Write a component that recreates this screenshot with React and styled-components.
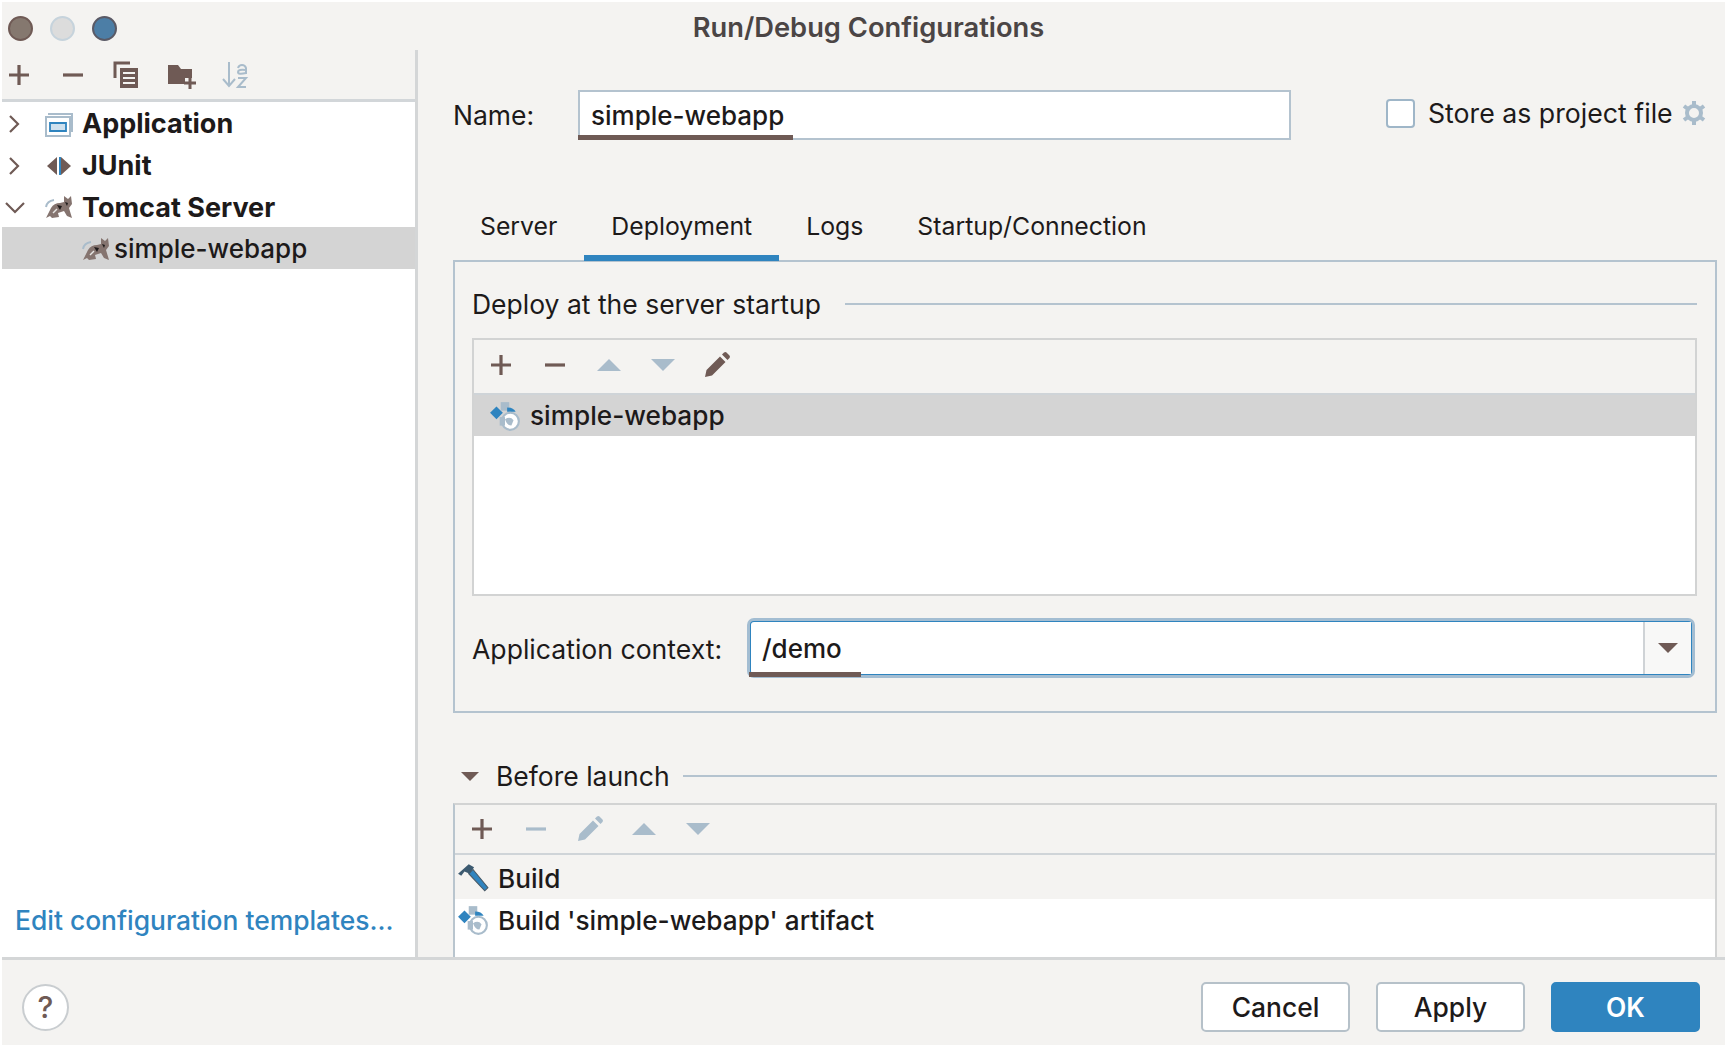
import React from 'react';
import styled, { createGlobalStyle } from 'styled-components';

const BROWN = '#6f5a55';
const BLUE = '#2f84bf';
const HAZE = '#a9bccb';
const LINE = '#b4c3cf';

const GlobalStyle = createGlobalStyle`
  html, body { margin: 0; padding: 0; background: #fff; }
  body { font-family: Inter, "Liberation Sans", sans-serif; color: #1d1a1a; }
  * { box-sizing: border-box; }
`;

const Window = styled.div`
  width: 1725px;
  height: 1047px;
  padding: 2px 0 2px 2px;
  display: flex;
  flex-direction: column;
  background: #fff;
  overflow: hidden;
`;

const TitleBar = styled.div`
  height: 48px;
  flex: none;
  background: #f4f3f1;
  display: flex;
  align-items: center;
  justify-content: center;
  position: relative;
  font-size: 27.300px;
  font-weight: 600;
  color: #4b4545;
  padding: 2px 0 0 10px;
`;

const Lights = styled.div`
  position: absolute;
  left: 6px;
  top: 14px;
  display: flex;
  gap: 17px;
`;

const Light = styled.span`
  width: 25px;
  height: 25px;
  border-radius: 50%;
  background: ${(p) => p.$fill};
  border: 2px solid ${(p) => p.$ring};
`;

const Body = styled.div`
  flex: 1;
  min-height: 0;
  display: flex;
`;

const Sidebar = styled.div`
  width: 416px;
  flex: none;
  display: flex;
  flex-direction: column;
  background: #fff;
  border-right: 3px solid #d4d6d7;
`;

const SideTools = styled.div`
  height: 52px;
  flex: none;
  background: #f4f3f1;
  border-bottom: 3px solid #d2d6d9;
  display: flex;
  align-items: center;
  padding-left: 2px;
  gap: 24px;
`;

const Tree = styled.div`
  flex: 1;
  display: flex;
  flex-direction: column;
`;

const TreeRow = styled.div`
  height: 41.700px;
  flex: none;
  display: flex;
  align-items: center;
  padding: 2px 0 0 ${(p) => (p.$child ? '79px' : '3px')};
  background: ${(p) => (p.$selected ? '#d4d4d4' : 'transparent')};
  font-size: ${(p) => (p.$child ? '26px' : '27px')};
  font-weight: ${(p) => (p.$child ? 500 : 700)};
`;

const Chevron = styled.svg`
  width: 20px;
  height: 20px;
  margin-right: 19px;
  flex: none;
`;

const RowIcon = styled.svg`
  width: ${(p) => p.$size || '30px'};
  height: ${(p) => p.$size || '30px'};
  margin-right: ${(p) => p.$gap || '8px'};
  flex: none;
`;

const TemplatesLink = styled.a`
  margin: auto 0 21px 13px;
  font-size: 26.400px;
  font-weight: 500;
  color: ${BLUE};
`;

const Main = styled.div`
  flex: 1;
  min-width: 0;
  background: #f4f3f1;
  padding: 40px 8px 0 35px;
  display: flex;
  flex-direction: column;
`;

const NameRow = styled.div`
  display: flex;
  align-items: center;
  height: 50px;
  font-size: 26.500px;
`;

const NameLabel = styled.span`
  width: 125px;
  flex: none;
`;

const TextField = styled.div`
  position: relative;
  width: 713px;
  height: 50px;
  flex: none;
  background: #fff;
  border: 2px solid ${LINE};
  display: flex;
  align-items: center;
  padding-left: 11px;
  font-size: 26px;
  font-weight: 500;
`;

const Squiggle = styled.span`
  position: absolute;
  left: ${(p) => p.$left || '0'};
  bottom: ${(p) => p.$bottom || '-2px'};
  width: ${(p) => p.$width};
  height: 5px;
  background: ${BROWN};
`;

const StoreCheck = styled.span`
  width: 29px;
  height: 29px;
  margin: 0 0 4px 95px;
  flex: none;
  background: #fff;
  border: 2px solid #9fb6c8;
  border-radius: 4px;
`;

const StoreLabel = styled.span`
  margin: 0 0 4px 13px;
  font-size: 26.700px;
`;

const Gear = styled.svg`
  width: 27px;
  height: 27px;
  margin: 0 0 3px 8px;
  flex: none;
`;

const Tabs = styled.div`
  display: flex;
  margin-top: 65px;
  height: 56px;
  flex: none;
  position: relative;
  z-index: 1;
`;

const Tab = styled.div`
  height: 56px;
  padding: 0 27px 9px;
  display: flex;
  align-items: center;
  font-size: 24.800px;
  border-bottom: 6px solid ${(p) => (p.$active ? BLUE : 'transparent')};
`;

const TabPanel = styled.div`
  height: 453px;
  margin-top: -1px;
  flex: none;
  border: 2px solid ${LINE};
  padding: 21px 18px 0 17px;
  display: flex;
  flex-direction: column;
`;

const Heading = styled.div`
  display: flex;
  align-items: center;
  height: 42px;
  flex: none;
  font-size: 26.500px;
  gap: 24px;
  &::after {
    content: '';
    flex: 1;
    height: 2px;
    background: ${LINE};
  }
`;

const ToolBox = styled.div`
  border: 2px solid #d2d3d3;
  border-left-color: ${(p) => p.$side || '#d2d3d3'};
  display: flex;
  flex-direction: column;
  flex: none;
  height: ${(p) => p.$height};
  margin-top: ${(p) => p.$top || '0'};
  background: #fff;
  overflow: hidden;
`;

const ToolRow = styled.div`
  height: ${(p) => p.$height || '50px'};
  flex: none;
  background: #f4f3f1;
  border-bottom: 2px solid #cfd4d8;
  display: flex;
  align-items: center;
  padding: 0 0 ${(p) => p.$lift || '0'} 12px;
  gap: 24px;
`;

const ListRow = styled.div`
  height: ${(p) => p.$height || '44px'};
  flex: none;
  display: flex;
  align-items: center;
  padding: ${(p) => p.$drop || '0'} 0 0 ${(p) => p.$indent || '2px'};
  font-size: 26.200px;
  font-weight: 500;
  background: ${(p) => p.$fill || 'transparent'};
`;

const ToolIcon = styled.svg`
  width: 30px;
  height: 30px;
  flex: none;
`;

const ContextRow = styled.div`
  display: flex;
  align-items: center;
  margin-top: 24px;
  height: 56px;
  flex: none;
  font-size: 26.600px;
`;

const ContextLabel = styled.span`
  width: 277px;
  flex: none;
  padding-top: 1px;
`;

const Combo = styled.div`
  position: relative;
  flex: 1;
  height: 56px;
  margin-right: 4px;
  display: flex;
  background: #fff;
  border: 2px solid ${BLUE};
  outline: 3px solid #a3bdd2;
  outline-offset: -1px;
  border-radius: 5px;
  font-size: 26px;
  font-weight: 500;
`;

const ComboText = styled.div`
  flex: 1;
  display: flex;
  align-items: center;
  padding-left: 11px;
  border-right: 2px solid #cfd3d6;
`;

const ComboArrow = styled.div`
  width: 46px;
  flex: none;
  display: flex;
  align-items: center;
  justify-content: center;
  background: #f8f8f7;
`;

const Triangle = styled.span`
  width: 0;
  height: 0;
  flex: none;
  border-left: ${(p) => p.$size}px solid transparent;
  border-right: ${(p) => p.$size}px solid transparent;
  border-top: ${(p) => p.$size}px solid ${BROWN};
`;

const LaunchHeading = styled(Heading)`
  margin-top: 42px;
  padding-left: 8px;
  gap: 0;
  &::after { margin-left: 13px; }
`;

const LaunchTitle = styled.span`
  margin-left: 17px;
`;

const Footer = styled.div`
  height: 88px;
  flex: none;
  background: #f4f3f1;
  border-top: 3px solid #d4d6d7;
  display: flex;
  align-items: center;
  padding: 9px 25px 0 20px;
  gap: 26px;
`;

const Help = styled.div`
  width: 47px;
  height: 47px;
  border-radius: 50%;
  background: #fff;
  border: 2px solid #c9cdd0;
  display: flex;
  align-items: center;
  justify-content: center;
  font-size: 30px;
  font-weight: 500;
  color: ${BROWN};
  margin-right: auto;
`;

const Button = styled.div`
  width: 149px;
  height: 50px;
  border-radius: 5px;
  border: 2px solid ${(p) => (p.$primary ? BLUE : '#b6c1c9')};
  background: ${(p) => (p.$primary ? BLUE : '#fff')};
  color: ${(p) => (p.$primary ? '#fff' : '#1d1a1a')};
  font-size: 26.400px;
  font-weight: ${(p) => (p.$primary ? 600 : 500)};
  display: flex;
  align-items: center;
  justify-content: center;
`;

const Plus = ({ color = BROWN }) => (
  <ToolIcon viewBox="0 0 30 30">
    <path d="M15 5v20M5 15h20" stroke={color} strokeWidth="3.200" />
  </ToolIcon>
);

const Minus = ({ color = BROWN }) => (
  <ToolIcon viewBox="0 0 30 30">
    <path d="M5 15h20" stroke={color} strokeWidth="3.200" />
  </ToolIcon>
);

const Up = () => (
  <ToolIcon viewBox="0 0 30 30">
    <path d="M3 21L15 9l12 12z" fill={HAZE} />
  </ToolIcon>
);

const Down = () => (
  <ToolIcon viewBox="0 0 30 30">
    <path d="M3 9l12 12L27 9z" fill={HAZE} />
  </ToolIcon>
);

const Pencil = ({ color = BROWN }) => (
  <ToolIcon viewBox="0 0 30 30">
    <path d="M3 27l1.500-7L18 6.500l5.500 5.500L10 25.500zM20 4.500l2-2q1.500-1 2.500 0l3 3q1 1 0 2.500l-2 2z" fill={color} />
  </ToolIcon>
);

const Tomcat = ({ gap }) => (
  <RowIcon viewBox="0 0 30 30" $gap={gap}>
    <path d="M2 26L7 16Q10 11 16 11L20 10 20 4 24 7 27 4 28 12 25 16 28 26 23 24 20 19 14 21 15 25 8 26 6 24z" fill="#85746f" />
    <path d="M2 15q1-6 8-7" fill="none" stroke={HAZE} strokeWidth="2" />
    <path d="M13 13l5 1-2 4zM21 10l3 1-1 3z" fill="#1f1a1a" />
    <path d="M9 21l4-4" stroke="#e8e6e4" strokeWidth="1.500" />
  </RowIcon>
);

const Artifact = () => (
  <RowIcon viewBox="0 0 30 30" $size="32px" $gap="9px">
    <path d="M1 12l6-6 6 6-6 6z" fill={BLUE} />
    <path d="M11 2h8v8h-8z" fill={HAZE} />
    <path d="M17 7q6 0 8 4h-8z" fill={BLUE} />
    <circle cx="20" cy="20" r="8" fill="#fff" stroke={HAZE} strokeWidth="2" />
    <path d="M15 18q5-3 8 1l-2 5q-4 0-6-6z" fill={HAZE} />
    <path d="M10 16h5v8h-5z" fill={HAZE} />
  </RowIcon>
);

const Hammer = () => (
  <RowIcon viewBox="0 0 30 30" $size="32px" $gap="9px">
    <path d="M11 11l4-4 14 17-3 3z" fill={BLUE} stroke="#4a5a66" strokeWidth="1" />
    <path d="M1 11L11 2l5 3-4 6-5-2-3 4z" fill="#3c5a70" />
  </RowIcon>
);

export default function App() {
  return (
    <Window>
      <GlobalStyle />
      <TitleBar>
        <Lights>
          <Light $fill="#85786f" $ring="#6f5a55" />
          <Light $fill="#dcdcdc" $ring="#c6d3dc" />
          <Light $fill="#4c7ea6" $ring="#5a5a66" />
        </Lights>
        Run/Debug Configurations
      </TitleBar>
      <Body>
        <Sidebar>
          <SideTools>
            <Plus />
            <Minus />
            <ToolIcon viewBox="0 0 30 30">
              <path d="M3 18V3h15" fill="none" stroke={BROWN} strokeWidth="3" />
              <path d="M8 8h18v20H8z" fill={BROWN} />
              <path d="M11 13h12M11 18h12M11 23h12" stroke="#f4f3f1" strokeWidth="2" />
            </ToolIcon>
            <ToolIcon viewBox="0 0 30 30">
              <path d="M2 5h10l3 4h11v9h-7v6H2z" fill={BROWN} />
              <path d="M24 17v12M18 23h12" stroke={BROWN} strokeWidth="3" />
            </ToolIcon>
            <ToolIcon viewBox="0 0 30 30">
              <path d="M9 2v23M3 19l6 7 6-7" fill="none" stroke={HAZE} strokeWidth="2" />
              <path d="M18 8q1-3 4-3t4 3v6M26 10q-8-1-8 2 0 3 8 1M18 18h8l-8 9h8" fill="none" stroke={HAZE} strokeWidth="2" />
            </ToolIcon>
          </SideTools>
          <Tree>
            <TreeRow>
              <Chevron viewBox="0 0 20 20"><path d="M5 2l8 8-8 8" fill="none" stroke={BROWN} strokeWidth="2.200" /></Chevron>
              <RowIcon viewBox="0 0 30 30">
                <path d="M4 5h24v18" fill="none" stroke={HAZE} strokeWidth="2" />
                <path d="M2 8h24v19H2z" fill="#fff" stroke={HAZE} strokeWidth="2" />
                <path d="M6 14h16v8H6z" fill="#cfe1ee" stroke={BLUE} strokeWidth="1.800" />
              </RowIcon>
              Application
            </TreeRow>
            <TreeRow>
              <Chevron viewBox="0 0 20 20"><path d="M5 2l8 8-8 8" fill="none" stroke={BROWN} strokeWidth="2.200" /></Chevron>
              <RowIcon viewBox="0 0 30 30">
                <path d="M13 6v18L3 15z" fill={BROWN} />
                <path d="M17 6v18l10-9z" fill={BROWN} />
                <path d="M16 6v18" stroke={BLUE} strokeWidth="2" />
              </RowIcon>
              JUnit
            </TreeRow>
            <TreeRow>
              <Chevron viewBox="0 0 20 20"><path d="M1 6l9 9 9-9" fill="none" stroke={BROWN} strokeWidth="2.200" /></Chevron>
              <Tomcat />
              Tomcat Server
            </TreeRow>
            <TreeRow $child $selected>
              <Tomcat gap="3px" />
              simple-webapp
            </TreeRow>
            <TemplatesLink>Edit configuration templates...</TemplatesLink>
          </Tree>
        </Sidebar>
        <Main>
          <NameRow>
            <NameLabel>Name:</NameLabel>
            <TextField>
              simple-webapp
              <Squiggle $width="215px" $left="-2px" />
            </TextField>
            <StoreCheck />
            <StoreLabel>Store as project file</StoreLabel>
            <Gear viewBox="0 0 27 27">
              <circle cx="13" cy="13" r="7" fill="none" stroke={HAZE} strokeWidth="4" />
              <path d="M13 1v5M13 20v5M3 6l4 3M19 17l4 3M3 20l4-3M19 9l4-3" stroke={HAZE} strokeWidth="4" />
            </Gear>
          </NameRow>
          <Tabs>
            <Tab>Server</Tab>
            <Tab $active>Deployment</Tab>
            <Tab>Logs</Tab>
            <Tab>Startup/Connection</Tab>
          </Tabs>
          <TabPanel>
            <Heading>Deploy at the server startup</Heading>
            <ToolBox $height="258px" $top="13px">
              <ToolRow $height="55px" $lift="3px">
                <Plus />
                <Minus />
                <Up />
                <Down />
                <Pencil />
              </ToolRow>
              <ListRow $fill="#d4d4d4" $indent="15px" $height="41px">
                <Artifact />
                simple-webapp
              </ListRow>
            </ToolBox>
            <ContextRow>
              <ContextLabel>Application context:</ContextLabel>
              <Combo>
                <ComboText>/demo</ComboText>
                <ComboArrow><Triangle $size={10} /></ComboArrow>
                <Squiggle $width="112px" $left="-2px" $bottom="-3px" />
              </Combo>
            </ContextRow>
          </TabPanel>
          <LaunchHeading>
            <Triangle $size={9} />
            <LaunchTitle>Before launch</LaunchTitle>
          </LaunchHeading>
          <ToolBox $height="156px" $top="6px" $side="#b9c5ce">
            <ToolRow>
              <Plus />
              <Minus color={HAZE} />
              <Pencil color={HAZE} />
              <Up />
              <Down />
            </ToolRow>
            <ListRow $fill="#f4f3f1" $height="44px" $drop="2px">
              <Hammer />
              Build
            </ListRow>
            <ListRow $height="42px">
              <Artifact />
              Build 'simple-webapp' artifact
            </ListRow>
          </ToolBox>
        </Main>
      </Body>
      <Footer>
        <Help>?</Help>
        <Button>Cancel</Button>
        <Button>Apply</Button>
        <Button $primary>OK</Button>
      </Footer>
    </Window>
  );
}
